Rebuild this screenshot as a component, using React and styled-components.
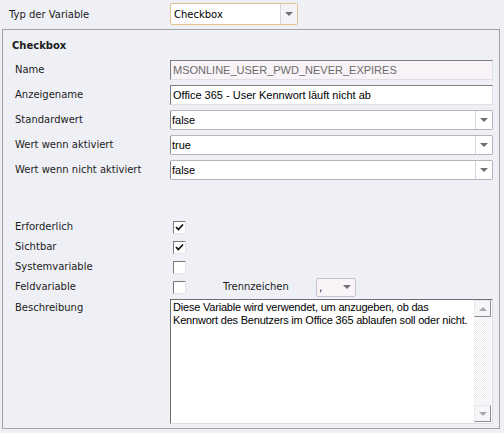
import styled, { createGlobalStyle } from 'styled-components';

const GlobalStyle = createGlobalStyle`
  html, body {
    margin: 0;
    padding: 0;
    background: #efeff6;
  }
  #root {
    width: 504px;
    height: 433px;
    overflow: hidden;
  }
`;

const Window = styled.div`
  width: 504px;
  height: 433px;
  box-sizing: border-box;
  padding: 3px 4px 0 2px;
  display: flex;
  flex-direction: column;
  background: #efeff6;
  font-family: 'DejaVu Sans', sans-serif;
  font-size: 10px;
  color: #1c1c1c;
`;

const TopRow = styled.div`
  display: flex;
  align-items: center;
  height: 22px;
  margin-bottom: 4px;
  padding-left: 7px;
`;

const TopLabel = styled.div`
  width: 161px;
`;

const Panel = styled.div`
  height: 400px;
  box-sizing: border-box;
  border: 1px solid #a2a2aa;
  display: flex;
  flex-direction: column;
`;

const Heading = styled.div`
  font-weight: bold;
  line-height: 14px;
  margin: 9px 0 7px 9px;
`;

const Group = styled.div`
  display: flex;
  flex-direction: column;
  gap: ${(p) => p.$gap || 0}px;
  margin-top: ${(p) => p.$top || 0}px;
`;

const Row = styled.div`
  display: flex;
  align-items: ${(p) => (p.$top ? 'flex-start' : 'center')};
  min-height: 20px;
  padding: 0 6px 0 12px;
`;

const Label = styled.div`
  width: ${(p) => p.$w || 155}px;
  flex: none;
  line-height: 12px;
  padding-top: ${(p) => p.$pt || 0}px;
  margin-left: ${(p) => p.$ml || 0}px;
`;

const Field = styled.div`
  flex: 1;
  height: 20px;
  box-sizing: border-box;
  border: 1px solid;
  border-color: #7e7e7e #dedee4 #dedee4 #7e7e7e;
  background: ${(p) => (p.$disabled ? '#f7f3f7' : '#ffffff')};
  color: ${(p) => (p.$disabled ? '#6c6c6c' : '#000000')};
  font-family: 'Liberation Sans', Arial, sans-serif;
  font-size: 11px;
  line-height: 18px;
  padding-left: 2px;
  white-space: nowrap;
  overflow: hidden;
`;

const Combo = styled.div`
  display: flex;
  flex: ${(p) => (p.$w ? 'none' : 1)};
  width: ${(p) => (p.$w ? `${p.$w}px` : 'auto')};
  height: ${(p) => p.$h || 20}px;
  box-sizing: border-box;
  border: 1px solid ${(p) => p.$border || '#b4b4bc'};
  border-left-color: ${(p) => p.$borderLeft || p.$border || '#8a8a92'};
  border-radius: 2px;
  background: ${(p) => p.$bg || '#ffffff'};
`;

const ComboText = styled.div`
  flex: 1;
  padding-left: ${(p) => p.$pl || 1}px;
  font-family: ${(p) => (p.$ui ? "'DejaVu Sans', sans-serif" : "'Liberation Sans', Arial, sans-serif")};
  font-size: ${(p) => (p.$ui ? 10 : 11)}px;
  display: flex;
  align-items: center;
  color: #000;
  white-space: nowrap;
`;

const ArrowButton = styled.div`
  width: 16px;
  flex: none;
  display: flex;
  align-items: center;
  justify-content: center;
  border-left: 1px solid ${(p) => p.$line || '#d4d4dc'};
  background: ${(p) => p.$bg || 'transparent'};

  &::after {
    content: '';
    border-left: 4px solid transparent;
    border-right: 4px solid transparent;
    border-top: 4px solid #6f6f76;
  }
`;

const Box = styled.div`
  width: 13px;
  height: 13px;
  box-sizing: border-box;
  margin-left: 3px;
  flex: none;
  border: 1px solid;
  border-color: #7a7a7a #e4e4e8 #e4e4e8 #7a7a7a;
  background: #ffffff;
  display: flex;
  align-items: center;
  justify-content: center;
`;

const TextArea = styled.div`
  flex: 1;
  height: 125px;
  box-sizing: border-box;
  border: 1px solid;
  border-color: #6e6e6e #dcdce2 #dcdce2 #6e6e6e;
  background: #ffffff;
  display: flex;
  padding: 0 1px 1px 0;
`;

const AreaText = styled.div`
  flex: 1;
  padding: 1px 2px;
  font-family: 'Liberation Sans', Arial, sans-serif;
  font-size: 11px;
  letter-spacing: -0.2px;
  line-height: 13px;
  color: #000;
  white-space: pre;
  overflow: hidden;
`;

const ScrollBar = styled.div`
  width: 17px;
  flex: none;
  display: flex;
  flex-direction: column;
  justify-content: space-between;
  background: repeating-conic-gradient(#ffffff 0 25%, #ececf0 0 50%) 0 0 / 2px 2px;
`;

const ScrollButton = styled.div`
  height: 17px;
  box-sizing: border-box;
  border: 1px solid;
  border-color: #e8e8ec #8c8c92 #8c8c92 #e8e8ec;
  background: #f6f6f8;
  display: flex;
  align-items: center;
  justify-content: center;

  &::after {
    content: '';
    border-left: 4px solid transparent;
    border-right: 4px solid transparent;
    ${(p) => (p.$up ? 'border-bottom: 4px solid #a8a8b0;' : 'border-top: 4px solid #a8a8b0;')}
  }
`;

const Check = () => (
  <svg width="9" height="9" viewBox="0 0 9 9">
    <path d="M1 4 L3.3 6.5 L8 1.5" fill="none" stroke="#111" strokeWidth="1.8" />
  </svg>
);

const CheckRow = ({ label, checked, children }) => (
  <Row>
    <Label>{label}</Label>
    <Box>{checked && <Check />}</Box>
    {children}
  </Row>
);

const Select = ({ value }) => (
  <Combo>
    <ComboText>{value}</ComboText>
    <ArrowButton />
  </Combo>
);

const App = () => {
  return (
    <>
      <GlobalStyle />
      <Window>
        <TopRow>
          <TopLabel>Typ der Variable</TopLabel>
          <Combo $w={128} $h={22} $border="#e2c38e">
            <ComboText $ui $pl={3}>Checkbox</ComboText>
            <ArrowButton $line="#d6d6de" $bg="#f4f4f8" />
          </Combo>
        </TopRow>

        <Panel>
          <Heading>Checkbox</Heading>

          <Group $gap={5}>
            <Row>
              <Label>Name</Label>
              <Field $disabled>MSONLINE_USER_PWD_NEVER_EXPIRES</Field>
            </Row>
            <Row>
              <Label>Anzeigename</Label>
              <Field>Office 365 - User Kennwort läuft nicht ab</Field>
            </Row>
            <Row>
              <Label>Standardwert</Label>
              <Select value="false" />
            </Row>
            <Row>
              <Label>Wert wenn aktiviert</Label>
              <Select value="true" />
            </Row>
            <Row>
              <Label>Wert wenn nicht aktiviert</Label>
              <Select value="false" />
            </Row>
          </Group>

          <Group $top={37}>
            <CheckRow label="Erforderlich" checked />
            <CheckRow label="Sichtbar" checked />
            <CheckRow label="Systemvariable" />
            <CheckRow label="Feldvariable">
              <Label $w={93} $ml={37}>Trennzeichen</Label>
              <Combo $w={40} $h={19} $bg="#f8f4f8" $border="#c4c4cc">
                <ComboText $pl={2}>,</ComboText>
                <ArrowButton $line="transparent" />
              </Combo>
            </CheckRow>
          </Group>

          <Group $top={2}>
            <Row $top>
              <Label $pt={3}>Beschreibung</Label>
              <TextArea>
                <AreaText>
                  {'Diese Variable wird verwendet, um anzugeben, ob das\nKennwort des Benutzers im Office 365 ablaufen soll oder nicht.'}
                </AreaText>
                <ScrollBar>
                  <ScrollButton $up />
                  <ScrollButton />
                </ScrollBar>
              </TextArea>
            </Row>
          </Group>
        </Panel>
      </Window>
    </>
  );
};

export default App;
